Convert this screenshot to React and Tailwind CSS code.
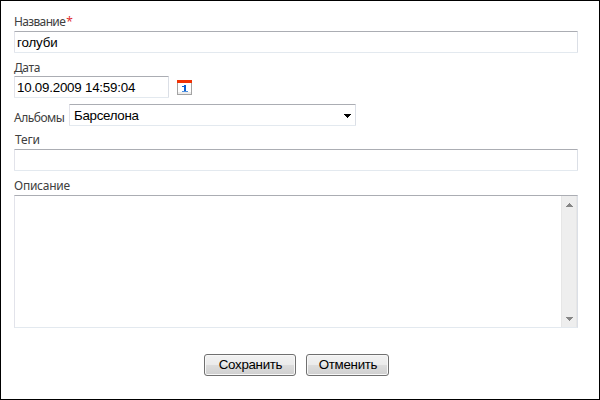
const field =
  'block h-[22px] border border-t-[#abadb3] border-r-[#dbdfe6] border-b-[#e3e9ef] border-l-[#e2e3ea] rounded-[1px] bg-white px-[2px] text-[13.33px] leading-[20px] text-black outline-none font-["Liberation_Sans",sans-serif]';

function Label({ children, className = '' }) {
  return (
    <div className={`h-[18px] whitespace-nowrap text-[12px] leading-[18px] text-[#404040] ${className}`}>
      {children}
    </div>
  );
}

function CalendarIcon() {
  return (
    <svg width="15" height="15" viewBox="0 0 15 15" shapeRendering="crispEdges">
      <rect x="0.5" y="0.5" width="14" height="14" fill="#fff" stroke="#a3a3a3" />
      <rect x="1" y="12" width="13" height="2" fill="#ececec" />
      <rect width="15" height="3" fill="#f03205" />
      <path d="M7 5h2v6h-2zM5 6h2v1h-2z" fill="#0b5fd0" />
      <rect x="5" y="11" width="6" height="1" fill="#4f8fdc" />
    </svg>
  );
}

function Button({ children, className }) {
  return (
    <button
      className={`h-[22px] rounded-[3px] border border-[#707070] bg-[linear-gradient(#f2f2f2_0%,#ebebeb_48%,#dddddd_50%,#cfcfcf_100%)] pl-[1px] text-[13.33px] leading-[20px] tracking-[-0.3px] text-black shadow-[inset_0_0_0_1px_#f8f8f8] font-["Liberation_Sans",sans-serif] ${className}`}
    >
      {children}
    </button>
  );
}

export default function App() {
  return (
    <div className='h-[400px] w-[600px] overflow-hidden border border-black bg-white pl-[13px] pr-[21px] pt-[12px] font-["Noto_Sans",sans-serif]'>
      <Label>
        <span className="tracking-[-0.65px]">Название</span>
        <span className="ml-[1px] text-[#e03030]">*</span>
      </Label>
      <input className={`${field} w-full pt-[1px] tracking-[-0.15px]`} defaultValue="голуби" />
      <Label className="mt-[5px] tracking-[-0.4px]"><span className="relative top-px">Дата</span></Label>
      <div className="flex items-center gap-[8px]">
        <input className={`${field} w-[155px] pt-[1px] tracking-[-0.22px]`} defaultValue="10.09.2009 14:59:04" />
        <CalendarIcon />
      </div>
      <div className="mt-[6px] flex h-[22px]">
        <Label className="mt-[5px] w-[55px] tracking-[-0.5px]">Альбомы</Label>
        <div className={`${field} flex! w-[287px] items-center justify-between pl-[4px]! pr-[4px]!`}>
          <span className="pt-[2px] tracking-[-0.3px]">Барселона</span>
          <svg width="7" height="4" viewBox="0 0 7 4" className="mt-[2px]" shapeRendering="crispEdges">
            <path d="M0 0h7v1h-1v1h-1v1h-1v1h-1v-1h-1v-1h-1v-1h-1z" fill="#000" />
          </svg>
        </div>
      </div>
      <Label className="mt-[5px] pl-[1px] tracking-[-0.2px]">Теги</Label>
      <input className={`${field} w-full`} />
      <Label className="mt-[6px] tracking-[-0.25px]">Описание</Label>
      <div className="flex h-[133px] justify-end border border-t-[#abadb3] border-r-[#dbdfe6] border-b-[#e3e9ef] border-l-[#e2e3ea]">
        <div className="flex w-[16px] flex-col items-center justify-between border-x border-[#e6e6e6] bg-[#eeeeee] pb-[6px] pt-[7px]">
          <svg width="7" height="4" viewBox="0 0 7 4" shapeRendering="crispEdges">
            <path d="M3 0h1v1h1v1h1v1h1v1h-7v-1h1v-1h1v-1h1z" fill="#868686" />
          </svg>
          <svg width="7" height="4" viewBox="0 0 7 4" shapeRendering="crispEdges">
            <path d="M0 0h7v1h-1v1h-1v1h-1v1h-1v-1h-1v-1h-1v-1h-1z" fill="#868686" />
          </svg>
        </div>
      </div>
      <div className="mt-[26px] flex gap-[10px] pl-[190px]">
        <Button className="w-[92px]">Сохранить</Button>
        <Button className="w-[83px]">Отменить</Button>
      </div>
    </div>
  );
}
